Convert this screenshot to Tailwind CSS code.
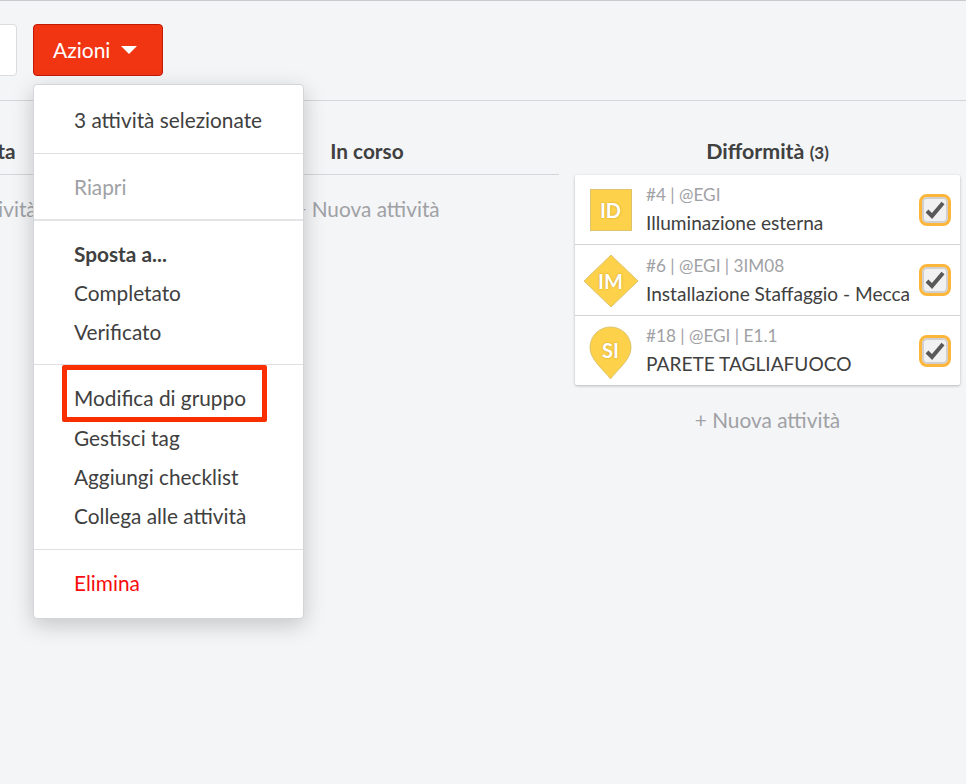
<!DOCTYPE html>
<html lang="en">
<head>
  <meta charset="UTF-8">
  <title>Azioni</title>
  <script src="https://cdn.jsdelivr.net/npm/@tailwindcss/browser@4"></script>
</head>
<body class="h-[784px] w-[966px] overflow-hidden bg-[#f4f5f7] font-['Lato',sans-serif] text-[#404040]">
  <div class="relative h-[784px] overflow-hidden border-t border-[#c9cbcf]">

    <!-- Toolbar -->
    <div class="flex h-[100px] gap-4 border-b border-[#d4d5d8] pt-[23px]">
      <div class="ml-[-40px] h-[52px] w-[57px] rounded-[4px] border border-[#dcdcdc] bg-white"></div>
      <button class="flex h-[52px] w-[130px] items-center rounded-[4px] border border-[#c21a05] bg-[#f13513] pl-[19px] text-[21px] text-white">
        Azioni
        <svg class="ml-[11px]" width="16" height="8" viewBox="0 0 16 8"><path d="M0 0h16L8 8z" fill="#fff"/></svg>
      </button>
    </div>

    <!-- Board columns -->
    <div class="ml-[-225px] flex w-[1185px] gap-4">
      <div class="w-[384px]">
        <div class="h-[74px] border-b border-[#d4d5d8] pt-[35px] text-center text-[20.8px] leading-[30px] font-bold">Pianificata</div>
        <div class="pt-[19px] pr-[6px] text-center text-[20.8px] leading-[30px] text-[#9fa1a5]">+ Nuova attività</div>
      </div>
      <div class="w-[384px]">
        <div class="h-[74px] border-b border-[#d4d5d8] pt-[35px] text-center text-[20.8px] leading-[30px] font-bold">In corso</div>
        <div class="pt-[19px] text-center text-[20.8px] leading-[30px] text-[#9fa1a5]">+ Nuova attività</div>
      </div>
      <div class="w-[385px]">
        <div class="h-[74px] pt-[35px] text-center text-[21.4px] leading-[30px] font-bold">Difformità <span class="text-[17px]">(3)</span></div>
        <div class="rounded-[2px] bg-white shadow-[0_1px_3px_rgba(0,0,0,0.25)]">

          <div class="flex h-[70px] items-center border-b border-[#d3d4d8]">
            <div class="flex w-[71px] shrink-0 justify-center">
              <div class="flex h-[42px] w-[42px] items-center justify-center border border-[#dcc46e] bg-[#fdd14a] text-[20px] font-bold text-white [text-shadow:0_0_2px_#c49a2a]">ID</div>
            </div>
            <div class="min-w-0 flex-1">
              <div class="text-[17.2px] leading-[26px] text-[#9fa1a5]">#4 | @EGI</div>
              <div class="text-[19.1px] leading-[30px]">Illuminazione esterna</div>
            </div>
            <div class="mr-[9px] flex h-8 w-8 items-center justify-center rounded-[8px] border-[3px] border-[#fdb63c] bg-[#f1f1f1] shadow-[inset_0_0_0_2px_#d0d0d0]">
              <svg width="22" height="20" viewBox="0 0 22 20"><path d="M3 11l5 5L19 3" fill="none" stroke="#595959" stroke-width="4"/></svg>
            </div>
          </div>

          <div class="flex h-[71px] items-center border-b border-[#d3d4d8]">
            <div class="flex w-[71px] shrink-0 justify-center">
              <div class="relative mt-[2px] flex h-[54px] w-[56px] items-center justify-center text-[20px] font-bold text-white [text-shadow:0_0_2px_#c49a2a]">
                <svg class="absolute inset-0" width="56" height="54" viewBox="0 0 56 54"><path d="M28 1L55 27 28 53 1 27z" fill="#fdd14a" stroke="#dcc46e"/></svg>
                <span class="relative">IM</span>
              </div>
            </div>
            <div class="min-w-0 flex-1 pt-[2px]">
              <div class="text-[17.2px] leading-[26px] text-[#9fa1a5]">#6 | @EGI | 3IM08</div>
              <div class="text-[19.1px] leading-[30px] whitespace-nowrap">Installazione Staffaggio - Mecca</div>
            </div>
            <div class="mr-[9px] flex h-8 w-8 items-center justify-center rounded-[8px] border-[3px] border-[#fdb63c] bg-[#f1f1f1] shadow-[inset_0_0_0_2px_#d0d0d0]">
              <svg width="22" height="20" viewBox="0 0 22 20"><path d="M3 11l5 5L19 3" fill="none" stroke="#595959" stroke-width="4"/></svg>
            </div>
          </div>

          <div class="flex h-[69px] items-center">
            <div class="flex w-[71px] shrink-0 justify-center">
              <div class="relative mt-[4px] flex h-[54px] w-[43px] justify-center pt-[9px] text-[20px] leading-[30px] font-bold text-white [text-shadow:0_0_2px_#c49a2a]">
                <svg class="absolute inset-0" width="43" height="54" viewBox="0 0 43 54"><path d="M21.5 53C15 44 1 34 1 21.5A20.5 20.5 0 0 1 42 21.5C42 34 28 44 21.5 53z" fill="#fdd14a" stroke="#dcc46e"/></svg>
                <span class="relative">SI</span>
              </div>
            </div>
            <div class="min-w-0 flex-1">
              <div class="text-[17.2px] leading-[26px] text-[#9fa1a5]">#18 | @EGI | E1.1</div>
              <div class="text-[19.1px] leading-[30px]">PARETE TAGLIAFUOCO</div>
            </div>
            <div class="mr-[9px] flex h-8 w-8 items-center justify-center rounded-[8px] border-[3px] border-[#fdb63c] bg-[#f1f1f1] shadow-[inset_0_0_0_2px_#d0d0d0]">
              <svg width="22" height="20" viewBox="0 0 22 20"><path d="M3 11l5 5L19 3" fill="none" stroke="#595959" stroke-width="4"/></svg>
            </div>
          </div>
        </div>
        <div class="pt-5 text-center text-[20.8px] leading-[30px] text-[#9fa1a5]">+ Nuova attività</div>
      </div>
    </div>

    <!-- Actions dropdown -->
    <div class="absolute top-[83px] left-[33px] w-[271px] rounded-[4px] border border-[#d4d5d8] bg-white text-[20.8px] leading-[39px] shadow-[0_6px_22px_rgba(0,0,0,0.2)]">
      <div class="h-[69px] border-b border-[#dfe0e2] px-10 pt-[15px]">3 attività selezionate</div>
      <div class="h-[67px] border-b-2 border-[#e3e4e6] px-10 pt-[13px] text-[#9fa1a5]">Riapri</div>
      <div class="h-[144px] border-b border-[#dfe0e2] px-10 pt-[13px]">
        <div class="font-bold">Sposta a...</div>
        <div>Completato</div>
        <div>Verificato</div>
      </div>
      <div class="h-[185px] border-b border-[#dfe0e2] px-10 pt-[13px]">
        <div class="mb-px">Modifica di gruppo</div>
        <div>Gestisci tag</div>
        <div>Aggiungi checklist</div>
        <div>Collega alle attività</div>
      </div>
      <div class="h-[68px] px-10 pt-[13px] text-[#f70d0d]">Elimina</div>
    </div>

    <!-- Annotation around "Modifica di gruppo" -->
    <div class="absolute top-[364px] left-[62px] h-[57px] w-[205px] rounded-[2px] border-[5px] border-[#f92f00]"></div>
  </div>
</body>
</html>
